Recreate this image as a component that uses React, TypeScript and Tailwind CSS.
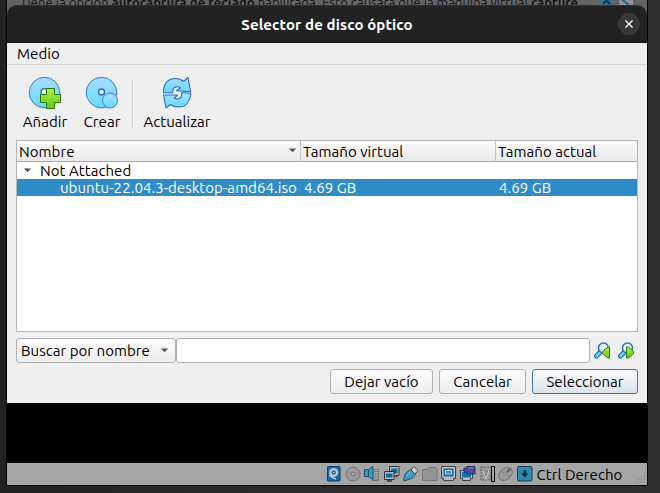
import type { ReactNode } from 'react';

const AddDisc = () => (
  <svg className="h-9 w-9" viewBox="-1 0 36 36">
    <circle cx="17.3" cy="17.500" r="15.500" fill="#bbb" opacity=".5" />
    <circle cx="16.5" cy="16.500" r="15.2" fill="url(#disc)" stroke="#3f78cb" />
    <circle cx="16.5" cy="16" r="3.4" fill="#eee" stroke="#286cc5" strokeWidth="1.4" />
    <path d="M18.500 12.500h8v6h6v8h-6v6h-8v-6h-6v-8h6z" fill="url(#green)" stroke="#267b08" />
  </svg>
);

const CreateDisc = () => (
  <svg className="h-9 w-9" viewBox="-1 0 36 36">
    <circle cx="17.300" cy="17.500" r="15.5" fill="#bbb" opacity=".5" />
    <circle cx="16.500" cy="16.500" r="15.200" fill="url(#disc)" stroke="#3f78cb" />
    <circle cx="16.500" cy="16" r="3" fill="#eee" stroke="#286cc5" strokeWidth="1.400" />
    <circle cx="25" cy="24.500" r="7.500" fill="url(#disc)" stroke="#3f78cb" />
  </svg>
);

const Refresh = () => (
  <svg className="h-9 w-9" viewBox="0 0 36 36">
    <g fill="url(#disc)" stroke="#286cc5" strokeWidth="1.100" strokeLinejoin="round">
      <path d="M4.500 16.800V14C5.500 6.500 10 2.500 16.500 2.500c3.500 0 6 1 8.200 3l4.300-4 2.700 14.300-14.200-1 4-3c-3-2-6.500-1-7.500 1.500-.4 1.200.5 2-.5 3.500z" />
      <path d="M31.700 17.200v2.300C30.500 26.500 26 31 19.500 31c-3.500 0-6-1-8.200-2.500L7 32 4.500 19h14l-3.200 3c3 2 6 .7 7-1.500.5-1.300-.3-2.500.7-4z" />
    </g>
  </svg>
);

const Find = ({ next = false }: { next?: boolean }) => (
  <svg className="h-[18px] w-[18px]" viewBox="0 0 18 18">
    <path d="m7.500 9-5 5" stroke="#1760ae" strokeWidth="4.800" strokeLinecap="round" />
    <path d="m7 9.500-4.500 4.500" stroke="#73d6ff" strokeWidth="2.700" strokeLinecap="round" />
    <circle cx="9.500" cy="6" r="5" fill="#e5f5ff" stroke="#2872c5" strokeWidth="1.500" />
    <path d={next ? 'M8.500 5v11h2l5-4.500v-2l-5-4.500z' : 'M15.500 5v11h-1.500L8.500 11.500v-2L14 5z'} fill="url(#green)" stroke="#267b08" />
  </svg>
);

const Arrow = () => (
  <svg className="h-[5px] w-[9px] shrink-0" viewBox="0 0 9 5"><path d="M.8.500h7.400L4.500 4.200z" fill="#555" /></svg>
);

const Status = ({ children }: { children: ReactNode }) => (
  <svg className="h-4 w-4 shrink-0" viewBox="0 0 16 16">{children}</svg>
);

const Button = ({ className, children }: { className: string; children: ReactNode }) => (
  <button className={`flex h-[25px] items-center justify-center rounded-[3px] border bg-linear-to-b leading-5 whitespace-nowrap ${className}`}>{children}</button>
);

const StatusBar = () => (
  <div className="flex h-[22px] items-center bg-[#a5a5a5] pl-[319px] text-black">
    <div className="flex items-center gap-[3.200px]">
      <Status>
        <rect x="1.500" y=".5" width="12.500" height="14.500" rx="1" fill="#126bae" stroke="#123f68" />
        <circle cx="7.700" cy="6.500" r="4.500" fill="#b7c9d4" /><circle cx="7.700" cy="6.500" r="2.200" fill="#376584" /><circle cx="7.700" cy="6.500" r=".8" fill="#ddd" />
        <path d="M3 9.500c3 0 3 3.500 7 3.500" fill="none" stroke="#ccd6db" strokeWidth="1.300" />
      </Status>
      <Status>
        <circle cx="8" cy="8" r="7" fill="#999" stroke="#777" /><circle cx="8" cy="8" r="1.800" fill="#aaa" stroke="#777" />
      </Status>
      <Status>
        <path d="M8 3.500h6.500v11H8" fill="#aaa" stroke="#777" /><path d="M10 5.500h4M10 8h4M10 10.500h4M10 13h4" stroke="#777" />
        <path d="M.5 3.500h4l4.500-3v13l-4.500-3h-4z" fill="#3b9ac7" stroke="#174e72" /><path d="M4.500 3.500v7" stroke="#174e72" />
      </Status>
      <Status>
        <path d="M5.500.5H15v9H5.500z" fill="#bbb" stroke="#333" /><path d="M7 2.500h6.500v5H7z" fill="#076bb0" />
        <path d="M.5 5.500h9.500v8H.5z" fill="#bbb" stroke="#333" /><path d="M2 7.500h6.500v4H2z" fill="#076bb0" />
        <path d="M12.500 10v1.500M3 15h5" stroke="#333" strokeWidth="1.500" />
      </Status>
      <Status>
        <path d="m8 4 3-3.500 4 4L12 8z" fill="#ccc" stroke="#444" /><path d="M1 15C.5 9 3 6 7.500 3.500l5 5C10 13 6 13 1 15z" fill="#4595c3" stroke="#174e72" />
        <path d="M4 9.500 7 6" stroke="#8ac5dd" />
      </Status>
      <Status><path d="M.5 3.500H6l1-2h7l1 2v11H.5z" fill="#949494" stroke="#777" /></Status>
      <Status>
        <path d="M.5.5h14v12h-2v2h-10v-2h-2z" fill="#bbb" stroke="#444" /><path d="M2.500 2.500h10v8h-10z" fill="#0870b5" /><path d="M4.500 4.500h6v3.500h-6z" fill="#4289af" stroke="#c0d7e2" />
      </Status>
      <Status>
        <path d="M.5 4.500h12v8h-2v2h-8v-2h-2z" fill="#bbb" stroke="#444" /><path d="M2 6h9v5.500H2z" fill="#0873bb" />
        <path d="M4 2h3V.5h8V8H7V6H4z" fill="#494f9c" stroke="#293066" /><path d="M8 2h6" stroke="#7c83bc" />
      </Status>
      <Status>
        <path d="M1 1h10v13H1z" fill="#999" stroke="#777" strokeWidth="1.500" strokeDasharray="2 1" /><path d="m3.500 4 2.500 7 2.500-7" fill="none" stroke="#ccc" strokeWidth="2" /><path d="m4 4 2 6 2-6" fill="none" stroke="#777" />
      </Status>
    </div>
    <span className="-ml-[5px] h-4 w-1 shrink-0 border border-black bg-[#aaa]" />
    <div className="ml-[3px] flex gap-[3px]">
      <Status>
        <ellipse cx="7.500" cy="8" rx="7.500" ry="5.500" transform="rotate(-40 7.500 8)" fill="#9b9b9b" stroke="#777" /><path d="M2 6c2-1 4 0 6 2s4 2 5 2" fill="none" stroke="#808080" /><path d="m9 6 3-3" stroke="#666" strokeWidth="2.500" />
      </Status>
      <Status>
        <rect x=".5" y=".5" width="14.500" height="14.500" rx="1" fill="#2d8cac" stroke="#173f5c" /><path d="M7.800 4v4" stroke="#122e43" strokeWidth="2.500" /><path d="M4 7.500h7.500l-3.700 4z" fill="#122e43" />
      </Status>
    </div>
    <span className="ml-1 pt-px leading-5 whitespace-nowrap">Ctrl Derecho</span>
    <svg className="mt-2 mr-px ml-auto h-3 w-3 shrink-0" viewBox="0 0 12 12"><path d="M10 1h1M7 4h1m2 0h1M4 7h1m2 0h1m2 0h1M1 10h1m2 0h1m2 0h1m2 0h1" stroke="#777" /></svg>
  </div>
);

export default function App() {
  return (
    <div className="h-[493px] w-[660px] overflow-hidden bg-linear-to-r from-[#222] via-[#2b2b2b] to-[#303030] pl-1.5 font-['Ubuntu','Noto_Sans',sans-serif] text-[15px] tracking-[.05px] text-black">
      <svg className="absolute h-0 w-0" aria-hidden="true">
        <defs>
          <linearGradient id="disc" x1="0" y1="0" x2="0" y2="1"><stop stopColor="#a9dcff" /><stop offset="1" stopColor="#65dbff" /></linearGradient>
          <linearGradient id="green" x1="0" y1="0" x2="0" y2="1"><stop stopColor="#b7ed48" /><stop offset="1" stopColor="#61c90c" /></linearGradient>
        </defs>
      </svg>
      <div className="w-[642px] border-x border-b border-black bg-black">
        <div className="flex h-4 overflow-hidden bg-[#636363] pl-[13px]">
          <p className="-mt-2 w-[510px] text-[13px] leading-5 whitespace-nowrap text-[#151515]">Tiene la opción <b>autocaptura de teclado</b> habilitada. Esto causará que la máquina virtual <b>capture</b></p>
          <svg className="ml-auto h-[5px] w-[55px]" viewBox="0 0 55 5"><path d="M7 0h14v5H7z" fill="#3e718a" /><path d="m11-3 7 7m0-7-7 7" stroke="#142f58" strokeWidth="2" /><path d="M27 0h14v5H27z" fill="#929292" /><path d="m28-2 9 7" stroke="#236482" strokeWidth="2" /></svg>
        </div>
        <div className="relative -mt-[11px] flex h-[38px] items-center rounded-t-[10px] border-t border-t-[#303030] border-b border-b-[#111] bg-[#222] text-white">
          <h1 className="w-full pt-0.5 text-center text-[15px] font-bold tracking-[.12px]">Selector de disco óptico</h1>
          <button className="absolute right-[7px] flex h-[22px] w-[22px] items-center justify-center rounded-full bg-[#383838]">
            <svg className="h-2 w-2" viewBox="0 0 8 8"><path d="m.5.5 7 7m0-7-7 7" stroke="#fff" strokeWidth="1.300" /></svg>
          </button>
        </div>
        <main className="h-[360px] bg-[#efefef]">
          <nav className="flex h-[22px] items-center border-b border-[#d3d3d3] pt-0.5 pl-2.5">Medio</nav>
          <div className="flex h-[75px] px-3 pt-[11px]">
            <button className="flex w-[52px] flex-col items-center"><AddDisc /><span className="leading-5">Añadir</span></button>
            <button className="ml-1 flex w-[54px] flex-col items-center"><CreateDisc /><span className="leading-5">Crear</span></button>
            <span className="mt-1 ml-[3px] h-12 w-0.5 border-r border-white bg-[#cfcfcf]" />
            <button className="ml-[6px] flex w-[74px] flex-col items-center"><Refresh /><span className="leading-5">Actualizar</span></button>
          </div>
          <section className="mx-[9px] h-[192px] border border-[#b5b5b5] bg-white leading-[17px]">
            <div className="grid h-[21px] grid-cols-[284px_195px_1fr] border-b border-[#aaa] bg-linear-to-b from-[#fbfbfb] to-[#e9e9e9] leading-[21px]">
              <div className="flex items-center justify-between border-r border-[#c3c3c3] pr-[3px] pl-0.5"><span>Nombre</span><span className="mb-[3px] flex"><Arrow /></span></div>
              <div className="border-r border-[#c3c3c3] pl-0.5">Tamaño virtual</div>
              <div className="pl-0.5">Tamaño actual</div>
            </div>
            <div className="flex h-[17px] items-center pl-1.5"><Arrow /><span className="ml-2 pb-px">Not Attached</span></div>
            <div className="grid h-[17px] grid-cols-[284px_195px_1fr] bg-[#308cc6] whitespace-nowrap text-white">
              <span className="pl-[43px]">ubuntu-22.04.3-desktop-amd64.iso</span><span className="pl-[3px]">4.69 GB</span><span className="pl-[3px]">4.69 GB</span>
            </div>
          </section>
          <div className="mt-1.5 flex h-[25px] items-center pl-[9px]">
            <button className="flex h-[25px] w-40 items-center justify-between rounded-[3px] border border-[#b1b1b1] bg-linear-to-b from-[#fdfdfd] to-[#ededed] pr-1.5 pl-1 leading-5 whitespace-nowrap">Buscar por nombre<Arrow /></button>
            <input className="h-[25px] w-[414px] rounded-[3px] border border-[#b1b1b1] bg-white" />
            <div className="ml-1 flex gap-1.5"><Find /><Find next /></div>
          </div>
          <div className="mt-1.5 mr-[9px] flex justify-end gap-1.5">
            <Button className="w-[103px] border-[#b1b1b1] from-[#fdfdfd] to-[#ededed]">Dejar vacío</Button>
            <Button className="w-[87px] border-[#b1b1b1] from-[#fdfdfd] to-[#ededed]">Cancelar</Button>
            <Button className="w-[106px] border-[#3b789d] from-[#fbfcfd] to-[#dbe4e9]">Seleccionar</Button>
          </div>
        </main>
        <div className="h-[60px] bg-black" />
        <StatusBar />
      </div>
    </div>
  );
}
